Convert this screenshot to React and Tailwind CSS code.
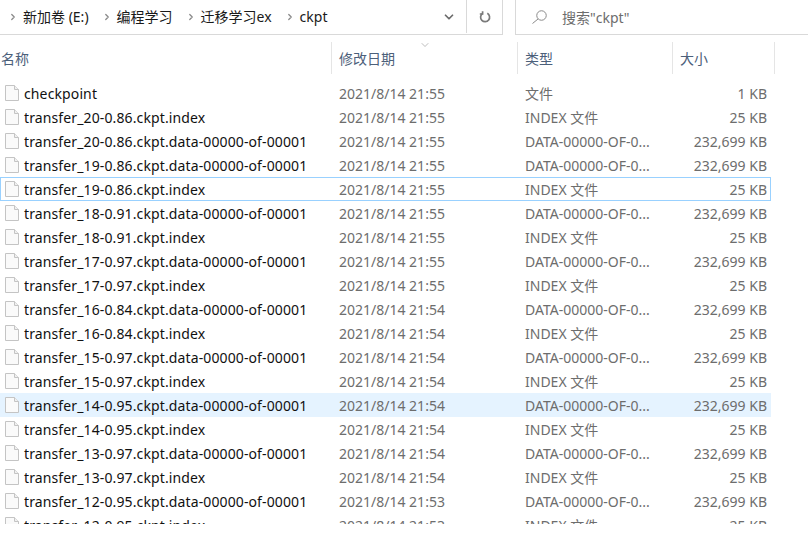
import { ChevronDown, ChevronRight } from 'lucide-react';

const files = [
  ['checkpoint', '21:55', '文件', '1 KB'],
  ['transfer_20-0.86.ckpt.index', '21:55', 'INDEX 文件', '25 KB'],
  ['transfer_20-0.86.ckpt.data-00000-of-00001', '21:55', 'DATA-00000-OF-0...', '232,699 KB'],
  ['transfer_19-0.86.ckpt.data-00000-of-00001', '21:55', 'DATA-00000-OF-0...', '232,699 KB'],
  ['transfer_19-0.86.ckpt.index', '21:55', 'INDEX 文件', '25 KB'],
  ['transfer_18-0.91.ckpt.data-00000-of-00001', '21:55', 'DATA-00000-OF-0...', '232,699 KB'],
  ['transfer_18-0.91.ckpt.index', '21:55', 'INDEX 文件', '25 KB'],
  ['transfer_17-0.97.ckpt.data-00000-of-00001', '21:55', 'DATA-00000-OF-0...', '232,699 KB'],
  ['transfer_17-0.97.ckpt.index', '21:55', 'INDEX 文件', '25 KB'],
  ['transfer_16-0.84.ckpt.data-00000-of-00001', '21:54', 'DATA-00000-OF-0...', '232,699 KB'],
  ['transfer_16-0.84.ckpt.index', '21:54', 'INDEX 文件', '25 KB'],
  ['transfer_15-0.97.ckpt.data-00000-of-00001', '21:54', 'DATA-00000-OF-0...', '232,699 KB'],
  ['transfer_15-0.97.ckpt.index', '21:54', 'INDEX 文件', '25 KB'],
  ['transfer_14-0.95.ckpt.data-00000-of-00001', '21:54', 'DATA-00000-OF-0...', '232,699 KB'],
  ['transfer_14-0.95.ckpt.index', '21:54', 'INDEX 文件', '25 KB'],
  ['transfer_13-0.97.ckpt.data-00000-of-00001', '21:54', 'DATA-00000-OF-0...', '232,699 KB'],
  ['transfer_13-0.97.ckpt.index', '21:54', 'INDEX 文件', '25 KB'],
  ['transfer_12-0.95.ckpt.data-00000-of-00001', '21:53', 'DATA-00000-OF-0...', '232,699 KB'],
  ['transfer_12-0.95.ckpt.index', '21:53', 'INDEX 文件', '25 KB'],
];

const crumbs = ['新加卷 (E:)', '编程学习', '迁移学习ex', 'ckpt'];
const columns = ['名称', '修改日期', '类型', '大小'];

function FileIcon() {
  return (
    <svg width="16" height="16" viewBox="0 0 16 16" className="shrink-0">
      <path d="M1.5 0.5H10.5L14.5 4.5V15.5H1.5Z" fill="#fafafa" stroke="#c4c4c4" />
      <path d="M10.5 0.5V4.5H14.5" fill="#f0f0f0" stroke="#c4c4c4" />
    </svg>
  );
}

function SearchIcon() {
  return (
    <svg width="15" height="14" viewBox="0 0 15 14" fill="none" stroke="#8a8a8a" className="shrink-0">
      <circle cx="9.5" cy="5.5" r="4.75" />
      <path d="M6 9L0.5 13.5" />
    </svg>
  );
}

function RefreshIcon() {
  return (
    <svg width="12" height="12" viewBox="0 0 12 12" fill="none" stroke="#7a7a7a" strokeWidth="1.7">
      <path d="M8.3 2.3A4.5 4.5 0 1 1 3.4 2.6" />
      <path d="M3.6 0.2V3H0.8" />
    </svg>
  );
}

function rowClass(index) {
  if (index === 13) return 'bg-[#e5f3ff] border-[#e5f3ff]';
  if (index === 4) return 'border-[#99d1ff]';
  return 'border-transparent';
}

export default function App() {
  return (
    <div className="w-[808px] h-[536px] overflow-hidden bg-white font-['Noto_Sans','Noto_Sans_CJK_SC',sans-serif] text-[14px]">
      <div className="flex h-[35px] gap-[12px]">
        <div className="flex w-[503px] items-center border-r border-b border-[#d9d9d9] pb-[1px]">
          <div className="flex flex-1 items-center pl-[3px] text-[#1a1a1a]">
            {crumbs.map((crumb) => (
              <div key={crumb} className="flex items-center">
                <ChevronRight size={10} strokeWidth={3} className="mx-[5px] text-[#8a8a8a]" />
                <span className="mr-[8px]">{crumb}</span>
              </div>
            ))}
          </div>
          <ChevronDown size={14} strokeWidth={3} className="mr-[10px] text-[#6b6b6b]" />
          <div className="flex h-full w-[36px] items-center justify-center border-l border-[#d9d9d9]">
            <RefreshIcon />
          </div>
        </div>
        <div className="flex flex-1 items-center gap-[15px] border-l border-b border-[#d9d9d9] pl-[16px] text-[#6d6d6d]">
          <SearchIcon />
          <span>搜索"ckpt"</span>
        </div>
      </div>

      <div className="relative mt-[7px] grid h-[32px] w-[775px] grid-cols-[331px_186px_155px_103px] text-[#4c607a]">
        <ChevronDown size={12} strokeWidth={1} className="absolute left-[419px] top-[-3px] text-[#7a7a7a]" />
        {columns.map((column, index) => (
          <div
            key={column}
            className={`flex items-center border-[#e5e5e5] ${index === 0 ? 'pl-[1px]' : 'border-l pl-[7px]'} ${index === 3 ? 'border-r' : ''}`}
          >
            {column}
          </div>
        ))}
      </div>

      <div className="mt-[7px] h-[443px] w-[771px] overflow-hidden">
        {files.map(([name, time, type, size], index) => (
          <div
            key={name}
            className={`grid h-[24px] grid-cols-[331px_186px_155px_99px] items-center border text-[#6d6d6d] ${rowClass(index)}`}
          >
            <div className="flex items-center gap-[4px] pl-[3px] tracking-[0.12px] text-[#111111]">
              <FileIcon />
              <span className="whitespace-nowrap">{name}</span>
            </div>
            <div className="pl-[7px]">{`2021/8/14 ${time}`}</div>
            <div className="pl-[7px] whitespace-nowrap">{type}</div>
            <div className="pr-[5px] text-right">{size}</div>
          </div>
        ))}
      </div>
    </div>
  );
}
